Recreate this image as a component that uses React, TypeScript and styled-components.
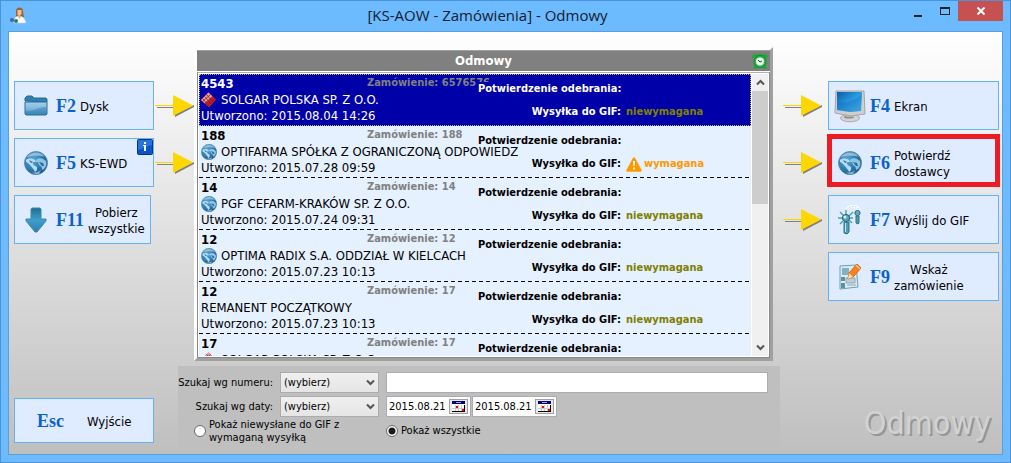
import React from "react";
import styled, { createGlobalStyle } from "styled-components";

const GlobalStyle = createGlobalStyle`
  * { box-sizing: border-box; }
  body {
    margin: 0;
    font-family: "DejaVu Sans Condensed", "DejaVu Sans", sans-serif;
    font-stretch: condensed;
    font-size: 13px;
    color: #000;
  }
  button, input, select { font: inherit; color: inherit; margin: 0; }
`;

const Window = styled.div`
  display: flex;
  flex-direction: column;
  min-height: 100vh;
  padding: 0 7px 7px;
  background: #6cbaff;
  border: 1px solid #4b93d4;
`;

const TitleBar = styled.header`
  display: grid;
  grid-template-columns: 104px 1fr 140px;
  align-items: start;
  height: 30px;
`;

const AppIcon = styled.span`
  display: block;
  padding: 6px 0 0 2px;
  svg { display: block; }
`;

const Title = styled.h1`
  margin: 0;
  text-align: center;
  font-family: "Open Sans", "Noto Sans", sans-serif;
  font-stretch: normal;
  font-weight: 400;
  font-size: 15px;
  line-height: 28px;
  white-space: nowrap;
  color: #14202c;
`;

const Controls = styled.div`
  display: flex;
  justify-content: flex-end;
`;

const ControlButton = styled.button<{ $close?: boolean }>`
  display: flex;
  align-items: center;
  justify-content: center;
  width: ${(p) => (p.$close ? 45 : 27)}px;
  height: 20px;
  padding: 0;
  border: 0;
  background: ${(p) => (p.$close ? "#c75050" : "transparent")};
`;

const Body = styled.main`
  flex: 1;
  display: flex;
  flex-direction: column;
  gap: 5px;
  padding: 15px 3px 7px 5px;
  border: 1px solid #5a9fdc;
  background: linear-gradient(#fff, #bfbfbf);
`;

const Top = styled.div`
  display: flex;
  align-items: flex-start;
`;

const Side = styled.div<{ $right?: boolean }>`
  flex: none;
  display: flex;
  flex-direction: column;
  align-items: ${(p) => (p.$right ? "flex-end" : "flex-start")};
  gap: 8px;
  width: ${(p) => (p.$right ? 226 : 180)}px;
  padding-top: 34px;
`;

const ActionLine = styled.div`
  display: flex;
  align-items: center;
  gap: 1px;
`;

const Arrow = styled.svg<{ $gap?: number }>`
  display: block;
  flex: none;
  margin-right: ${(p) => p.$gap || 0}px;
`;

const Action = styled.button<{ $width: number; $pad: number; $gap: number; $marked?: boolean }>`
  position: relative;
  display: flex;
  align-items: center;
  gap: ${(p) => p.$gap}px;
  width: ${(p) => p.$width}px;
  height: 49px;
  padding: 0 0 0 ${(p) => p.$pad}px;
  border: 1px solid #66b2fa;
  background: #dfebff;
  &::after {
    content: "";
    display: ${(p) => (p.$marked ? "block" : "none")};
    position: absolute;
    inset: -5px -2px -1px;
    border: 5px solid #ed1c24;
  }
`;

const IconSlot = styled.span<{ $size: number }>`
  display: flex;
  flex: none;
  justify-content: center;
  width: ${(p) => p.$size}px;
`;

const KeyName = styled.span`
  font-family: "Liberation Serif", serif;
  font-stretch: normal;
  font-weight: 700;
  font-size: 18px;
  line-height: 24px;
  color: #0a62cc;
`;

const ActionText = styled.span`
  padding-top: 2px;
  line-height: 16px;
  text-align: center;
  white-space: pre-line;
`;

const KeyAndText = styled.span`
  display: flex;
  align-items: center;
  gap: 4px;
`;

const InfoBadge = styled.span`
  position: absolute;
  top: 0;
  right: 0;
  line-height: 0;
`;

const Panel = styled.section`
  flex: 1;
  min-width: 0;
  border: 3px solid;
  border-color: #fff #a0a0a0 #a0a0a0 #fff;
`;

const PanelHead = styled.div`
  display: grid;
  grid-template-columns: 18px 1fr 18px;
  align-items: center;
  height: 22px;
  border-top: 1px solid #a0a0a0;
  border-bottom: 1px solid #fff;
  background: #808080;
`;

const PanelTitle = styled.h2`
  grid-column: 2;
  margin: 0;
  text-align: center;
  font-size: 13px;
  line-height: 20px;
  color: #fff;
`;

const ListFrame = styled.div`
  display: flex;
  gap: 1px;
  height: 286px;
  padding: 1px;
  border: 1px solid #888;
  border-top-color: #b0b0b0;
  background: #fff;
`;

const List = styled.ul`
  flex: 1;
  min-width: 0;
  margin: 0;
  padding: 0;
  list-style: none;
  overflow: hidden;
  background: #e6f1ff;
`;

const Row = styled.li<{ $selected?: boolean }>`
  display: flex;
  height: 52px;
  color: ${(p) => (p.$selected ? "#fff" : "#000")};
  background: ${(p) => (p.$selected ? "#0000a8" : "#e6f1ff")};
  outline: ${(p) => (p.$selected ? "1px dotted #b8b860" : "0")};
  outline-offset: -1px;
`;

const Separator = styled.svg`
  display: block;
  width: 100%;
  height: 1px;
  margin-top: -1px;
`;

const Main = styled.div`
  flex: 1;
  min-width: 0;
  padding: 2px 0 0 2px;
  line-height: 16px;
  white-space: nowrap;
`;

const NumberLine = styled.div`
  display: flex;
  height: 16px;
  font-weight: 700;
`;

const OrderNumber = styled.span`
  flex: none;
  width: 166px;
`;

const OrderRef = styled.span`
  font-size: 11px;
  line-height: 14px;
  color: #808080;
`;

const NameLine = styled.div`
  position: relative;
  z-index: 1;
  display: flex;
  align-items: center;
  gap: 4px;
  height: 16px;
  svg { flex: none; }
`;

const Status = styled.dl<{ $selected?: boolean }>`
  position: relative;
  flex: none;
  display: grid;
  grid-template-columns: 143px 1fr;
  grid-auto-rows: 14px;
  gap: 9px 5px;
  width: 273px;
  margin: 8px 0 0;
  font-size: 11px;
  line-height: 14px;
  font-weight: 700;
  white-space: nowrap;
  dt { text-align: right; background: ${(p) => (p.$selected ? "#0000a8" : "#e6f1ff")}; }
  dd { margin: 0; }
`;

const StatusValue = styled.dd<{ $warn?: boolean }>`
  display: flex;
  align-items: center;
  gap: 2px;
  color: ${(p) => (p.$warn ? "#ff9900" : "#808000")};
`;

const ScrollBar = styled.div`
  flex: none;
  display: flex;
  flex-direction: column;
  width: 16px;
  background: #f0f0f0;
`;

const ScrollButton = styled.button`
  display: flex;
  align-items: center;
  justify-content: center;
  height: 17px;
  padding: 0;
  border: 0;
  background: transparent;
`;

const ScrollTrack = styled.div`
  flex: 1;
`;

const ScrollThumb = styled.div`
  height: 113px;
  background: #cdcdcd;
`;

const Bottom = styled.div`
  display: flex;
  align-items: flex-end;
`;

const ExitButton = styled.button`
  display: flex;
  align-items: center;
  gap: 23px;
  flex: none;
  width: 140px;
  height: 45px;
  margin: 0 24px 4px 0;
  padding: 0 0 0 22px;
  border: 1px solid #66b2fa;
  background: #dfebff;
`;

const Filters = styled.form`
  flex: 1;
  display: grid;
  grid-template-columns: 95px 99px 1fr;
  grid-auto-rows: 21px;
  align-items: center;
  gap: 3px 7px;
  padding: 6px 12px 6px 0;
  background: #bfbfbf;
  font-size: 11px;
`;

const FieldLabel = styled.label`
  text-align: right;
  white-space: nowrap;
`;

const SelectBox = styled.span`
  position: relative;
  display: flex;
  height: 21px;
  svg { position: absolute; right: 4px; top: 7px; pointer-events: none; }
`;

const Select = styled.select`
  appearance: none;
  width: 100%;
  padding: 0 3px;
  border: 1px solid #acacac;
  border-radius: 0;
  background: linear-gradient(#f0f0f0, #e5e5e5);
`;

const TextBox = styled.input`
  width: 100%;
  height: 21px;
  border: 1px solid #abadb3;
  background: #fff;
`;

const Dates = styled.div`
  display: flex;
  gap: 1px;
`;

const DateBox = styled.span`
  display: flex;
  align-items: center;
  width: 85px;
  height: 21px;
  padding-right: 2px;
  border: 1px solid #abadb3;
  background: #fff;
  input {
    flex: 1;
    min-width: 0;
    padding: 0 0 0 2px;
    border: 0;
    background: transparent;
  }
`;

const CalendarButton = styled.button`
  display: flex;
  align-items: center;
  justify-content: center;
  width: 19px;
  height: 15px;
  padding: 0;
  border: 1px solid #a0a0a0;
  background: #e8e8e8;
`;

const Choices = styled.div`
  grid-column: 1 / -1;
  display: flex;
  align-items: center;
  height: 27px;
  padding-left: 16px;
`;

const Choice = styled.label<{ $width?: number }>`
  display: flex;
  align-items: center;
  gap: 3px;
  width: ${(p) => (p.$width ? p.$width + "px" : "auto")};
  line-height: 13px;
  white-space: pre-line;
`;

const Radio = styled.input`
  appearance: none;
  flex: none;
  width: 12px;
  height: 12px;
  border: 1px solid #6a6a6a;
  border-radius: 50%;
  background: #fff;
  &:checked { background: radial-gradient(circle, #1a1a1a 0 3px, #fff 4px); }
`;

const Watermark = styled.div`
  flex: none;
  width: 219px;
  padding-right: 8px;
  text-align: right;
  font-size: 32px;
  line-height: 48px;
  color: #d2d2d2;
  text-shadow: 2px 2px 0 #969696;
`;

const Globe = ({ size }: { size: number }) => (
  <svg width={size} height={size} viewBox="0 0 24 24" aria-hidden="true">
    <defs>
      <radialGradient id={`globe${size}`} cx="0.35" cy="0.35" r="0.75">
        <stop offset="0" stopColor="#5fa9d4" />
        <stop offset="0.55" stopColor="#2f7db2" />
        <stop offset="1" stopColor="#1d4f80" />
      </radialGradient>
    </defs>
    <circle cx="12" cy="12" r="11.5" fill={`url(#globe${size})`} stroke="#5585ad" strokeWidth="0.8" />
    <path d="M3 6C7 0 17 0 21 6 16 4 8 5 3 6z" fill="#a9cfe6" opacity="0.75" />
    <path d="M2 9c2-2 6-2 9 0l1 2-3 0c-1 2 2 4 4 5l0 3-2 2c-1-3-3-4-4-6l-3-3-2-1z" fill="#b5dcf1" />
    <path d="M12 9c2-2 5-2 7-1l3 2c1 3 0 6-2 8l-2 1c0-3-1-4-3-5l-1-3-2 0z" fill="#8cc4e4" />
    <path d="M5 9l4 2-2 1zM15 11l4 1 1 3-2 0z" fill="#28689a" />
    <path d="M8 21c3 1 7 0 9-2l-2 4-4 0z" fill="#79b4d8" />
  </svg>
);

const Folder = () => (
  <svg width="24" height="22" viewBox="0 0 24 22" aria-hidden="true">
    <defs>
      <linearGradient id="folder" x1="0" y1="0" x2="0" y2="1">
        <stop offset="0" stopColor="#a6cfe8" />
        <stop offset="0.5" stopColor="#7fb8dc" />
        <stop offset="1" stopColor="#3d88b8" />
      </linearGradient>
    </defs>
    <path d="M1 6V3l2-2h5l2 2h12l1 1v3z" fill="#2f7fb0" stroke="#286b94" />
    <path d="M1 7h22v12l-1 1H2l-1-1z" fill="url(#folder)" stroke="#2a6d96" />
    <path d="M2 16c7 1 12-4 20-4v7H2z" fill="#2f80b4" opacity="0.5" />
  </svg>
);

const DownArrow = () => (
  <svg width="22" height="26" viewBox="0 0 22 26" aria-hidden="true">
    <defs>
      <linearGradient id="down" x1="0" y1="0" x2="0" y2="1">
        <stop offset="0" stopColor="#1a7090" />
        <stop offset="0.5" stopColor="#3f9fcb" />
        <stop offset="1" stopColor="#2b7fb4" />
      </linearGradient>
    </defs>
    <path d="M6 2l1-1h8l1 1v10h5v2L12 25h-2L1 14v-2h5z" fill="url(#down)" stroke="#3f88a8" />
  </svg>
);

const Monitor = () => (
  <svg width="32" height="34" viewBox="0 0 32 34" aria-hidden="true">
    <defs>
      <linearGradient id="screen" x1="0" y1="0" x2="1" y2="1">
        <stop offset="0" stopColor="#0b5ca8" />
        <stop offset="0.5" stopColor="#2a9be0" />
        <stop offset="1" stopColor="#64c8f5" />
      </linearGradient>
    </defs>
    <ellipse cx="16" cy="29" rx="9.5" ry="3.8" fill="#d4d4d4" stroke="#aaa" />
    <ellipse cx="15" cy="28" rx="5" ry="1.6" fill="#8e8e8e" />
    <path d="M12 24h8v4h-8z" fill="#bbb" />
    <path d="M2 2h28l1 23-14 2L1 24z" fill="#cfcfcf" stroke="#a4a4a4" />
    <path d="M3 3h25l-1 19-11 1-13-2z" fill="url(#screen)" />
    <path d="M3 13C12 15 22 11 28 5l-1 17-11 1-13-2z" fill="#0a68b8" opacity="0.35" />
  </svg>
);

const Wands = () => (
  <svg width="24" height="30" viewBox="0 0 24 30" fill="none" aria-hidden="true">
    <path d="M9 5c2-5 11-5 12 1" stroke="#fff" strokeWidth="3" />
    <path d="M9 5c2-5 11-5 12 1" stroke="#b6dce8" strokeDasharray="2 1" />
    <path d="M8 5v5M2 7l4 4M15 7l-4 4M0 13h5M11 13h4M2 19l3-3M14 18l-3-3" stroke="#49a0a8" strokeWidth="1.4" />
    <circle cx="8" cy="13" r="3.6" fill="#5ba5b8" stroke="#285f78" />
    <circle cx="7" cy="12" r="1.5" fill="#d9f4f8" />
    <path d="M6 17h5v10l-2 2-3-1z" fill="#4d9eb5" stroke="#2e7187" />
    <path d="M7.5 18v9" stroke="#bfe6ee" />
    <circle cx="19.5" cy="8" r="2.6" fill="#65acc0" stroke="#2d6980" />
    <path d="M18 11h3v7l-1 1-2-1z" fill="#4d9eb5" stroke="#2e7187" />
  </svg>
);

const Note = () => (
  <svg width="24" height="28" viewBox="0 0 24 28" aria-hidden="true">
    <path d="M2 3l16-1 2 22-18 2z" fill="#dcebf1" stroke="#6aa0b2" />
    <path d="M4 5h7v7H4z" fill="#7fb2c4" />
    <path d="M8 15h9v5H8z" fill="#bccdd5" stroke="#8daab5" />
    <path d="M3 14h4v4H3zM3 20h4v5H3z" fill="#5d90a5" />
    <path d="M9 22h9" stroke="#8daab5" />
    <path d="M11 10l8-9 4 4-8 9-5 2z" fill="#f58220" stroke="#d8610e" />
    <path d="M11 10l4 4-5 2z" fill="#f7dfb8" />
    <path d="M18 2l4 4" stroke="#ffc08a" strokeWidth="1.5" />
  </svg>
);

const Diamond = () => (
  <svg width="16" height="16" viewBox="0 0 16 16" aria-hidden="true">
    <path d="M7.5 0.5l7.5 7-7 8-8-7.5z" fill="#c4202c" />
    <path d="M7.5 0.5L0 8l4 3.5 7.5-7z" fill="#f29a9a" />
    <path d="M5.5 2.5l7 8M3.5 4.5l7 8M1.5 6.5l7 8M9.5 2.5l-8 7M11.5 4.5l-8 7M13.5 6.5l-8 7" stroke="#7c1420" strokeWidth="0.7" />
  </svg>
);

const Clock = () => (
  <svg width="16" height="18" viewBox="0 0 16 18" aria-hidden="true">
    <path d="M1 6C0 3 3 1 6 3zM15 6c1-3-2-5-5-3zM3 13l-1 3 1 1 3-2zM13 13l1 3-1 1-3-2z" fill="#1fa83a" stroke="#1fa83a" />
    <path d="M7 1h2v3H7z" fill="#1fa83a" />
    <circle cx="8" cy="9.5" r="6" fill="#25b545" stroke="#118a2b" />
    <circle cx="8" cy="9.5" r="4" fill="#e9fbe9" />
    <path d="M6 8l2 2 2-1" stroke="#333" fill="none" />
  </svg>
);

const Warning = () => (
  <svg width="16" height="15" viewBox="0 0 16 15" role="img" aria-label="Uwaga">
    <path d="M8 1.5L14.5 13.5h-13z" fill="#ff9900" stroke="#ff9900" strokeWidth="2.5" strokeLinejoin="round" />
    <path d="M7 4h2l-0.300 5H7.300zM7 10.500h2v2H7z" fill="#fff" />
  </svg>
);

const Person = () => (
  <svg width="17" height="17" viewBox="0 0 17 17" aria-hidden="true">
    <path d="M6 5c-1-6 8-6 7 0l1 5H6z" fill="#a0622c" />
    <path d="M7.5 3h4v4l-2 2-2-1z" fill="#f0bf95" />
    <path d="M4 16c0-5 2-7 5-7s6 2 7 7z" fill="#f7f9fc" stroke="#c6d4e2" strokeWidth="0.5" />
    <path d="M8 9l1.500 3L11 9z" fill="#e2a67b" />
    <circle cx="2" cy="13" r="2" fill="#4a59cc" />
    <circle cx="6" cy="14" r="2" fill="#208c3c" />
  </svg>
);

const Calendar = () => (
  <svg width="13" height="11" viewBox="0 0 13 11" shapeRendering="crispEdges" aria-hidden="true">
    <path d="M0 0h13v11H0z" fill="#fff" />
    <path d="M0 0h13v3H0z" fill="#000080" />
    <path d="M4 1h5v1H4z" fill="#aaa" />
    <path d="M0 7h12v1H0zM3 4h1v6H3zM6 4h1v6H6zM9 4h1v6H9z" fill="#ccc" />
    <path d="M0 10h13v1H0zM12 4h1v7h-1z" fill="#000" />
    <path d="M4 5h2v2H4zM10 8h2v2h-2z" fill="#f00" />
  </svg>
);

const Chevron = ({ up }: { up?: boolean }) => (
  <svg width="9" height="7" viewBox="0 0 9 7" aria-hidden="true">
    <path d={up ? "M1 5.5l3.5-3.5L8 5.5" : "M1 1.5l3.5 3.5L8 1.5"} fill="none" stroke="#555" strokeWidth="2" />
  </svg>
);

const FlowArrow = ({ gap }: { gap?: number }) => (
  <Arrow width="39" height="22" viewBox="0 0 39 22" $gap={gap} aria-hidden="true">
    <path d="M2 12.5h18" stroke="#808080" />
    <path d="M0 10.5h18" stroke="#ffd700" />
    <path d="M20 22l19-10v-2L20 19z" fill="#808080" />
    <path d="M18 0l20 10.5L18 21z" fill="#ffd700" />
  </Arrow>
);

const DashLine = () => (
  <Separator aria-hidden="true">
    <line x1="0" y1="0.5" x2="100%" y2="0.5" stroke="#000" strokeDasharray="4 3" />
  </Separator>
);

type Order = {
  no: string;
  ref: string;
  name: string;
  created: string;
  icon?: "globe" | "diamond";
  required?: boolean;
};

const orders: Order[] = [
  { no: "4543", ref: "6576576", name: "SOLGAR POLSKA SP. Z O.O.", created: "2015.08.04 14:26", icon: "diamond" },
  { no: "188", ref: "188", name: "OPTIFARMA SPÓŁKA Z OGRANICZONĄ ODPOWIEDZ", created: "2015.07.28 09:59", icon: "globe", required: true },
  { no: "14", ref: "14", name: "PGF CEFARM-KRAKÓW SP. Z O.O.", created: "2015.07.24 09:31", icon: "globe" },
  { no: "12", ref: "12", name: "OPTIMA RADIX S.A. ODDZIAŁ W KIELCACH", created: "2015.07.23 10:13", icon: "globe" },
  { no: "12", ref: "17", name: "REMANENT POCZĄTKOWY", created: "2015.07.23 10:13" },
  { no: "17", ref: "17", name: "SOLGAR POLSKA SP. Z O.O.", created: "2015.07.23 10:13", icon: "diamond" },
];

const OrderRow = ({ order, selected }: { order: Order; selected: boolean }) => (
  <>
    <Row $selected={selected}>
      <Main>
        <NumberLine>
          <OrderNumber>{order.no}</OrderNumber>
          <OrderRef>Zamówienie: {order.ref}</OrderRef>
        </NumberLine>
        <NameLine>
          {order.icon === "globe" && <Globe size={16} />}
          {order.icon === "diamond" && <Diamond />}
          {order.name}
        </NameLine>
        <div>Utworzono: {order.created}</div>
      </Main>
      <Status $selected={selected}>
        <dt>Potwierdzenie odebrania:</dt>
        <dd />
        <dt>Wysyłka do GIF:</dt>
        <StatusValue $warn={order.required}>
          {order.required && <Warning />}
          {order.required ? "wymagana" : "niewymagana"}
        </StatusValue>
      </Status>
    </Row>
    {!selected && <DashLine />}
  </>
);

type ActionProps = {
  k: string;
  text: string;
  icon: React.ReactNode;
  right?: boolean;
  width?: number;
  marked?: boolean;
  info?: boolean;
};

const ActionButton = ({ k, text, icon, right, width, marked, info }: ActionProps) => (
  <Action $width={width || (right ? 171 : 140)} $pad={right ? 5 : 9} $gap={right ? 4 : 8} $marked={marked}>
    <IconSlot $size={right ? 32 : 24}>{icon}</IconSlot>
    <KeyAndText>
      <KeyName>{k}</KeyName>
      <ActionText>{text}</ActionText>
    </KeyAndText>
    {info && (
      <InfoBadge>
        <svg width="16" height="16" viewBox="0 0 16 16" role="img" aria-label="Informacja">
          <rect x="0.5" y="0.5" width="15" height="15" rx="1" fill="#0b56c4" stroke="#06357f" />
          <path d="M1 1h14v5L1 11z" fill="#3c8bea" opacity="0.6" />
          <path d="M7 3h2v2H7zM6 6h3v6H7V7H6z" fill="#fff" />
        </svg>
      </InfoBadge>
    )}
  </Action>
);

const DateField = ({ label }: { label: string }) => (
  <DateBox>
    <input type="text" aria-label={label} defaultValue="2015.08.21" />
    <CalendarButton type="button" aria-label="Kalendarz">
      <Calendar />
    </CalendarButton>
  </DateBox>
);

export default function App() {
  return (
    <>
      <GlobalStyle />
      <Window>
        <TitleBar>
          <AppIcon><Person /></AppIcon>
          <Title>[KS-AOW - Zamówienia] - Odmowy</Title>
          <Controls>
            <ControlButton aria-label="Minimalizuj">
              <svg width="8" height="12"><path d="M0 10h8v2H0z" fill="#222" /></svg>
            </ControlButton>
            <ControlButton aria-label="Maksymalizuj">
              <svg width="10" height="8"><path d="M0 0h10v8H0zM1 2v5h8V2z" fill="#222" fillRule="evenodd" /></svg>
            </ControlButton>
            <ControlButton $close aria-label="Zamknij">
              <svg width="8" height="8"><path d="M0.500 0.500l7 7M7.500 0.500l-7 7" stroke="#fff" strokeWidth="2" /></svg>
            </ControlButton>
          </Controls>
        </TitleBar>
        <Body>
          <Top>
            <Side>
              <ActionLine>
                <ActionButton k="F2" text="Dysk" icon={<Folder />} />
                <FlowArrow />
              </ActionLine>
              <ActionLine>
                <ActionButton k="F5" text="KS-EWD" icon={<Globe size={24} />} info />
                <FlowArrow />
              </ActionLine>
              <ActionButton k="F11" text={"Pobierz\nwszystkie"} icon={<DownArrow />} width={137} />
            </Side>
            <Panel>
              <PanelHead>
                <PanelTitle>Odmowy</PanelTitle>
                <Clock />
              </PanelHead>
              <ListFrame>
                <List>
                  {orders.map((order, i) => (
                    <OrderRow key={i} order={order} selected={i === 0} />
                  ))}
                </List>
                <ScrollBar>
                  <ScrollButton aria-label="W górę"><Chevron up /></ScrollButton>
                  <ScrollTrack><ScrollThumb /></ScrollTrack>
                  <ScrollButton aria-label="W dół"><Chevron /></ScrollButton>
                </ScrollBar>
              </ListFrame>
            </Panel>
            <Side $right>
              <ActionLine>
                <FlowArrow gap={5} />
                <ActionButton right k="F4" text="Ekran" icon={<Monitor />} />
              </ActionLine>
              <ActionLine>
                <FlowArrow gap={5} />
                <ActionButton right k="F6" text={"Potwierdź\ndostawcy"} icon={<Globe size={24} />} marked />
              </ActionLine>
              <ActionLine>
                <FlowArrow gap={5} />
                <ActionButton right k="F7" text="Wyślij do GIF" icon={<Wands />} />
              </ActionLine>
              <ActionButton right k="F9" text={"Wskaż\nzamówienie"} icon={<Note />} />
            </Side>
          </Top>
          <Bottom>
            <ExitButton>
              <KeyName>Esc</KeyName>
              <ActionText>Wyjście</ActionText>
            </ExitButton>
            <Filters>
              <FieldLabel htmlFor="by-number">Szukaj wg numeru:</FieldLabel>
              <SelectBox>
                <Select id="by-number"><option>(wybierz)</option></Select>
                <Chevron />
              </SelectBox>
              <TextBox type="text" aria-label="Numer" />
              <FieldLabel htmlFor="by-date">Szukaj wg daty:</FieldLabel>
              <SelectBox>
                <Select id="by-date"><option>(wybierz)</option></Select>
                <Chevron />
              </SelectBox>
              <Dates>
                <DateField label="Data od" />
                <DateField label="Data do" />
              </Dates>
              <Choices>
                <Choice $width={192}>
                  <Radio type="radio" name="show" />
                  {"Pokaż niewysłane do GIF z\nwymaganą wysyłką"}
                </Choice>
                <Choice>
                  <Radio type="radio" name="show" defaultChecked />
                  Pokaż wszystkie
                </Choice>
              </Choices>
            </Filters>
            <Watermark>Odmowy</Watermark>
          </Bottom>
        </Body>
      </Window>
    </>
  );
}
